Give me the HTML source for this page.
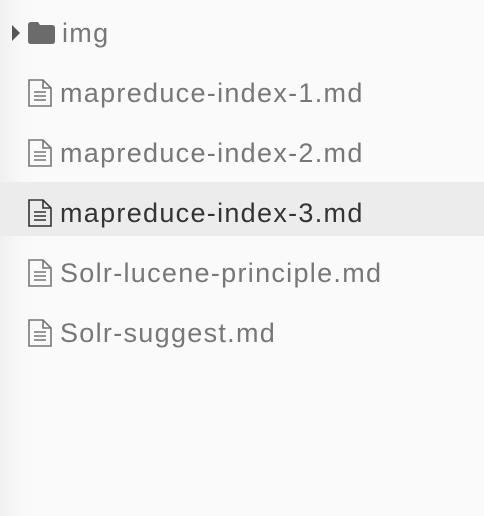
<!DOCTYPE html>
<html><head><style>
html,body{margin:0;padding:0;width:484px;height:516px;overflow:hidden;}
body{background:linear-gradient(to right,#f0f0f0 0,#f8f8f8 20px,#fafafa 40px,#fafafa 100%);font-family:"Liberation Sans",sans-serif;position:relative;}
.row{position:absolute;left:0;width:484px;height:54px;}
.sel{background:#ececec;}
.t{position:absolute;left:60px;top:0;height:54px;line-height:54px;font-size:27px;color:#777;letter-spacing:1.3px;white-space:nowrap;}
.sel .t{color:#333;}
svg{position:absolute;}
</style></head><body>
<div class="row" style="top:6px">
<svg style="left:12px;top:19px" width="9" height="16"><path d="M0 0L8 8L0 16Z" fill="#555"/></svg>
<svg style="left:28px;top:16px" width="27" height="22"><path d="M0 3Q0 0 3 0H10L12 3H24Q27 3 27 6V19Q27 22 24 22H3Q0 22 0 19Z" fill="#6b6b6b"/></svg>
<div class="t" style="left:62px">img</div></div>
<div class="row" style="top:66px">
<svg style="left:28px;top:13px" width="25" height="28"><path d="M1 1H15L23 9V27H1Z M15 1V9H23" fill="none" stroke="#777" stroke-width="1.6"/><path d="M6 13H18M6 17H18M6 21H18" stroke="#777" stroke-width="1.6"/></svg>
<div class="t">mapreduce-index-1.md</div></div>
<div class="row" style="top:126px">
<svg style="left:28px;top:13px" width="25" height="28"><path d="M1 1H15L23 9V27H1Z M15 1V9H23" fill="none" stroke="#777" stroke-width="1.6"/><path d="M6 13H18M6 17H18M6 21H18" stroke="#777" stroke-width="1.6"/></svg>
<div class="t">mapreduce-index-2.md</div></div>
<div class="row sel" style="top:182px;height:54px">
<svg style="left:28px;top:17px" width="25" height="28"><path d="M1 1H15L23 9V27H1Z M15 1V9H23" fill="none" stroke="#333" stroke-width="1.6"/><path d="M6 13H18M6 17H18M6 21H18" stroke="#333" stroke-width="1.6"/></svg>
<div class="t" style="top:4px">mapreduce-index-3.md</div></div>
<div class="row" style="top:246px">
<svg style="left:28px;top:13px" width="25" height="28"><path d="M1 1H15L23 9V27H1Z M15 1V9H23" fill="none" stroke="#777" stroke-width="1.6"/><path d="M6 13H18M6 17H18M6 21H18" stroke="#777" stroke-width="1.6"/></svg>
<div class="t">Solr-lucene-principle.md</div></div>
<div class="row" style="top:306px">
<svg style="left:28px;top:13px" width="25" height="28"><path d="M1 1H15L23 9V27H1Z M15 1V9H23" fill="none" stroke="#777" stroke-width="1.6"/><path d="M6 13H18M6 17H18M6 21H18" stroke="#777" stroke-width="1.6"/></svg>
<div class="t">Solr-suggest.md</div></div>
</body></html>
